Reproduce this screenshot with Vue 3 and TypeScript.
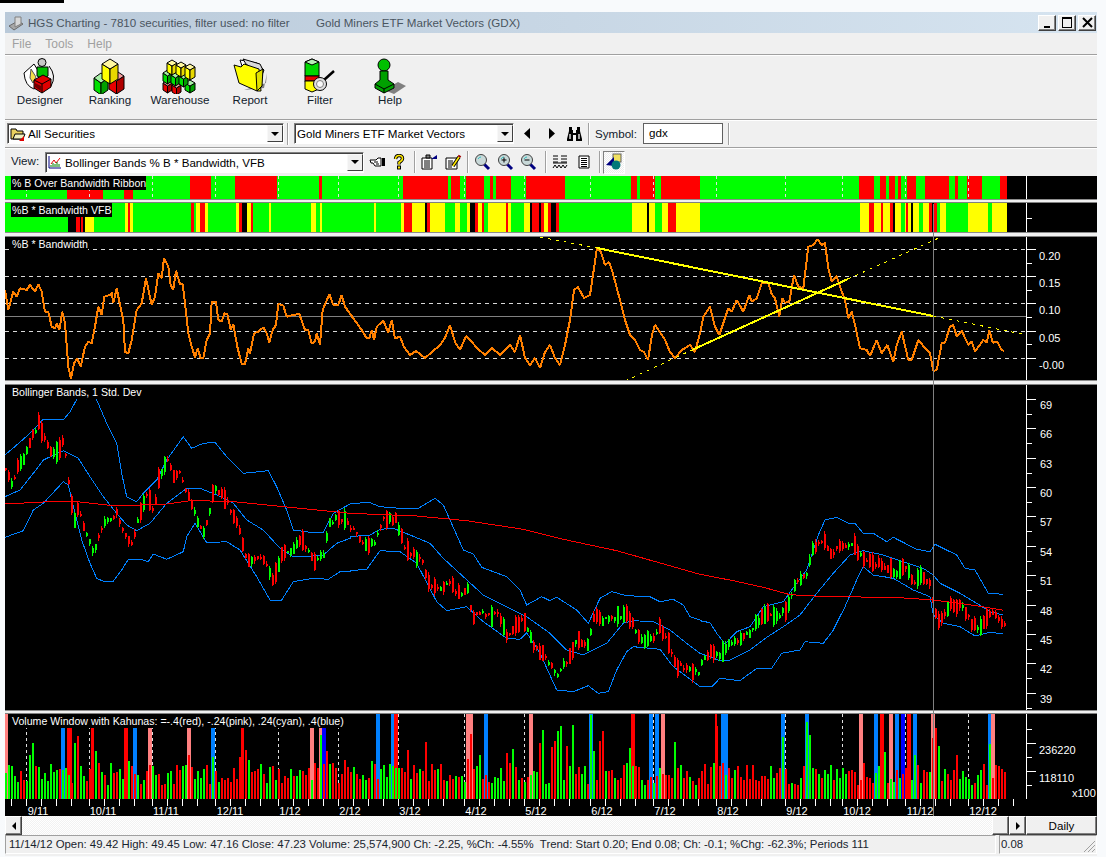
<template>
  <div class="page">
    <div class="top-strip"><div class="top-black"></div></div>
    <div class="window">
      <div class="titlebar">
        <svg class="app-icon" width="16" height="16" viewBox="0 0 16 16">
          <path d="M1 11 L10 6 L15 9 L6 15 Z" fill="#a8a8a8" stroke="#6a6a6a" />
          <path d="M7 2 h6 v7 l-6 3 Z" fill="#d8d8d8" stroke="#808080" />
        </svg>
        <span class="title-app">HGS Charting - 7810 securities, filter used: no filter</span>
        <span class="title-doc">Gold Miners ETF Market Vectors (GDX)</span>
        <div class="win-buttons">
          <button class="win-btn"><span class="glyph-min"></span></button>
          <button class="win-btn"><span class="glyph-max"></span></button>
          <button class="win-btn win-close">
            <svg width="11" height="11" viewBox="0 0 11 11"><path d="M1 1 L10 10 M10 1 L1 10" stroke="#000" stroke-width="2" /></svg>
          </button>
        </div>
      </div>

      <div class="menubar">
        <span>File</span>
        <span>Tools</span>
        <span>Help</span>
      </div>

      <div class="toolbar">
        <div class="tool">
          <svg width="36" height="36" viewBox="0 0 36 36">
            <path d="M2 15 L12 6 L23 24 L12 31 Q3 28 2 15 Z" fill="#fff" stroke="#000" />
            <path d="M9 11 L14 19 L11 25 L8 20 Z" fill="#f4e04a" stroke="#555" />
            <circle cx="20" cy="4.5" r="4" fill="#c8c8c8" stroke="#000" />
            <path d="M15 9 h11 v9 l-5 3 l-6 -3 Z" fill="#00c000" stroke="#000" />
            <path d="M12 22 L21 17 L29 21 L29 29 L20 35 L12 30 Z" fill="#e00000" stroke="#000" />
            <path d="M12 22 L20 26 L29 21 M20 26 V35" fill="none" stroke="#000" />
            <path d="M13 25 L19 28 V33 L13 29 Z" fill="#700000" />
            <path d="M27 8 Q35 18 29 28" fill="none" stroke="#000" />
          </svg>
          <span>Designer</span>
        </div>
        <div class="tool">
          <svg width="36" height="36" viewBox="0 0 36 36">
            <g v-for="(f, i) in rankingFaces" :key="i"><polygon :points="f.points" :fill="f.fill" stroke="#000" /></g>
          </svg>
          <span>Ranking</span>
        </div>
        <div class="tool">
          <svg width="36" height="36" viewBox="0 0 36 36">
            <g v-for="(f, i) in warehouseFaces" :key="i"><polygon :points="f.points" :fill="f.fill" stroke="#000" /></g>
          </svg>
          <span>Warehouse</span>
        </div>
        <div class="tool">
          <svg width="36" height="36" viewBox="0 0 36 36">
            <path d="M12 32 L34 25 L35 15 L32 30 Z" fill="#808080" />
            <path d="M8 2 L25 5 L32 12 L28 22 L10 8 Z" fill="#fff" stroke="#000" />
            <path d="M11 1 L28 6 L31 12 L30 18 L14 6 Z" fill="#d8d8d8" stroke="#000" />
            <path d="M2 7 L9 9 L12 6 L27 11 L29 33 L25 33 L7 25 Z" fill="#ffff00" stroke="#000" />
            <path d="M24 15 L31 11 L30 28 L25 33 Z" fill="#e0e000" stroke="#000" />
          </svg>
          <span>Report</span>
        </div>
        <div class="tool">
          <svg width="36" height="36" viewBox="0 0 36 36">
            <path d="M3 4 L10 1 L17 4 V18 H3 Z" fill="#00d800" stroke="#000" />
            <path d="M3 4 L10 1 L17 4 L10 7 Z" fill="#b8f0b8" stroke="#000" />
            <rect x="3" y="18" width="14" height="5" fill="#e80000" stroke="#000" />
            <path d="M3 23 H17 V31 L10 34 L3 31 Z" fill="#ffff00" stroke="#000" />
            <path d="M22 22 L32 13" stroke="#000" stroke-width="2.5" />
            <circle cx="18" cy="26" r="6.5" fill="#e0e0e0" stroke="#000" />
            <circle cx="18" cy="26" r="3.5" fill="#f8f8f8" stroke="#808080" />
          </svg>
          <span>Filter</span>
        </div>
        <div class="tool">
          <svg width="36" height="36" viewBox="0 0 36 36">
            <path d="M12 32 L26 24 L34 28 L22 36 Z" fill="#808080" />
            <circle cx="12" cy="7" r="6" fill="#00c000" stroke="#000" />
            <path d="M8 13 H16 V22 L22 26 V30 L12 35 L3 30 V26 L8 22 Z" fill="#00a000" stroke="#000" />
            <path d="M3 26 L12 31 L22 26 M12 31 V35" fill="none" stroke="#000" />
          </svg>
          <span>Help</span>
        </div>
      </div>

      <div class="row row-combos">
        <div class="combo combo-all">
          <svg width="16" height="16" viewBox="0 0 16 16">
            <path d="M1 3 h5 l1 2 h6 v8 H1 Z" fill="#e8d060" stroke="#000" />
            <path d="M3 13 L5 8 H15 L13 13 Z" fill="#f0f0c0" stroke="#000" />
            <path d="M9 15 L14 10 L14 15 Z" fill="#e00000" />
          </svg>
          <span class="combo-text">All Securities</span>
          <span class="combo-arrow"><i></i></span>
        </div>
        <span class="groove groove-first"></span>
        <div class="combo combo-etf">
          <span class="combo-text">Gold Miners ETF Market Vectors</span>
          <span class="combo-arrow"><i></i></span>
        </div>
        <svg class="nav-icon nav-prev" width="10" height="14" viewBox="0 0 10 14"><path d="M8 1 V12 L2 6.5 Z" fill="#000" /></svg>
        <svg class="nav-icon nav-next" width="10" height="14" viewBox="0 0 10 14"><path d="M2 1 V12 L8 6.5 Z" fill="#000" /></svg>
        <svg class="nav-icon nav-find" width="17" height="15" viewBox="0 0 17 15">
          <path d="M3 1 h3 v3 h1 v3 h3 v-3 h1 v-3 h3 v4 l2 8 v2 h-6 v-6 h-3 v6 h-6 v-2 l2 -8 Z" fill="#000" />
          <path d="M3 8 h2 v5 h-2 Z M12 8 h2 v5 h-2 Z" fill="#a0a0a0" />
        </svg>
        <span class="groove groove-sym"></span>
        <span class="sym-label">Symbol:</span>
        <div class="sym-input">gdx</div>
        <span class="groove"></span>
      </div>

      <div class="row row-view">
        <span class="view-label">View:</span>
        <div class="combo combo-view">
          <svg width="14" height="14" viewBox="0 0 14 14">
            <path d="M1 1 V13 H13" fill="none" stroke="#000080" />
            <path d="M3 9 L6 5 L8 8 L12 3" fill="none" stroke="#e00000" />
            <path d="M3 12 V10 M5 12 V8 M7 12 V9 M9 12 V7 M11 12 V9" stroke="#008000" />
          </svg>
          <span class="combo-text">Bollinger Bands % B * Bandwidth, VFB</span>
          <span class="combo-arrow"><i></i></span>
        </div>
        <svg class="view-hand" width="17" height="12" viewBox="0 0 17 12">
          <path d="M1 4 H7 L9 2 H12 V10 H6 L4 7 H2 Z" fill="#fff" stroke="#000" />
          <rect x="13" y="2" width="3" height="8" fill="#000" />
          <path d="M5 6 H9 M7 8 H10" stroke="#000" />
        </svg>
        <svg class="view-help" width="12" height="16" viewBox="0 0 12 16">
          <path d="M2.5 5 Q3 1.5 6 1.5 Q9.5 1.5 9.5 4.5 Q9.5 6.5 6 8.5 V10.5" fill="none" stroke="#000" stroke-width="3.4" />
          <path d="M2.5 5 Q3 1.5 6 1.5 Q9.5 1.5 9.5 4.5 Q9.5 6.5 6 8.5 V10.5" fill="none" stroke="#ffe800" stroke-width="1.6" />
          <rect x="4.5" y="12" width="3" height="3" fill="#ffe800" stroke="#000" />
        </svg>
        <span class="groove"></span>
        <svg class="view-doc" width="17" height="16" viewBox="0 0 17 16">
          <path d="M1 4 H11 V15 H1 Z" fill="#fff" stroke="#000" />
          <path d="M3 7 H9 M3 9 H9 M3 11 H9 M3 13 H9" stroke="#000" />
          <path d="M5 1 H9 V4 H5 Z" fill="#808080" stroke="#000" />
          <path d="M10 5 L16 1 V5 Z" fill="#000080" />
        </svg>
        <svg class="view-doc view-edit" width="17" height="16" viewBox="0 0 17 16">
          <path d="M1 4 H12 V15 H1 Z" fill="#fff" stroke="#000" />
          <path d="M3 7 H8 M3 9 H8 M3 11 H7 M3 13 H7" stroke="#000" />
          <path d="M8 12 L14 3" stroke="#000" stroke-width="3.4" />
          <path d="M8 12 L14 3" stroke="#ffe800" stroke-width="1.6" />
          <path d="M14 3 L15 1.5" stroke="#a00000" stroke-width="3" />
        </svg>
        <span class="groove"></span>
        <svg v-for="z in zoomIcons" :key="z" class="view-zoom" width="17" height="18" viewBox="0 0 17 18">
          <path d="M10 11 L15 16" stroke="#000080" stroke-width="3" />
          <circle cx="7" cy="7" r="5.5" fill="#c8d8d8" stroke="#404040" />
          <path d="M4 6 Q5 4 7 4" fill="none" stroke="#30c0c0" />
          <path v-if="z !== 'fit'" d="M4.5 7 H9.5" stroke="#000" />
          <path v-if="z === 'in'" d="M7 4.5 V9.5" stroke="#000" />
        </svg>
        <span class="groove groove-tight"></span>
        <svg class="view-lines" width="16" height="15" viewBox="0 0 16 15">
          <path d="M1 1 H6 M9 1 H15 M1 4 H6 M9 4 H15 M1 7 H6 M9 7 H15 M1 8 H15" stroke="#000" />
          <path d="M1 13 L3 10 L5 13 L7 10 L9 13 L11 10 L13 13 L15 10" fill="none" stroke="#000" />
        </svg>
        <svg class="view-list" width="12" height="14" viewBox="0 0 12 14">
          <path d="M1 1 H11 V13 H1 Z" fill="#fff" stroke="#000" />
          <path d="M3 3.5 H9 M3 5.5 H9 M3 7.5 H9 M3 9.5 H9 M3 11.5 H9" stroke="#000" />
        </svg>
        <span class="groove"></span>
        <div class="toggle-btn">
          <svg width="18" height="18" viewBox="0 0 18 18">
            <rect x="8" y="1" width="8" height="8" fill="#f0e060" stroke="#606060" />
            <path d="M1 12 L9 4 V13 Z" fill="#000080" />
            <circle cx="11" cy="12" r="4.5" fill="#007878" />
          </svg>
        </div>
      </div>

      <div class="charts">
        <div class="panel">
          <svg class="chart" width="1092" height="23" viewBox="5 176 1092 23" shape-rendering="crispEdges">
            <rect x="5" y="176" width="1002" height="23" fill="#00ff00" />
            <rect v-for="(s, i) in ribbonA" :key="i" :x="s[0]" y="176" :width="s[1] - s[0]" height="23" fill="#ff0000" />
            <line v-for="m in months" :key="m" :x1="m + 0.5" y1="176" :x2="m + 0.5" y2="199" class="month-dash" />
            <line x1="1026.5" y1="176" x2="1026.5" y2="199" stroke="#fff" />
          </svg>
          <span class="panel-label">% B Over Bandwidth Ribbon</span>
        </div>
        <div class="sep"></div>
        <div class="panel">
          <svg class="chart" width="1092" height="29" viewBox="5 203 1092 29" shape-rendering="crispEdges">
            <rect x="5" y="203" width="1002" height="29" fill="#00ff00" />
            <rect v-for="(s, i) in ribbonB" :key="i" :x="s[0]" y="203" :width="s[1] - s[0]" height="29" :fill="ribbonColor[s[2]]" />
            <line x1="1026.5" y1="203" x2="1026.5" y2="232" stroke="#fff" />
            <line x1="1027" y1="218.5" x2="1032" y2="218.5" stroke="#fff" />
          </svg>
          <span class="panel-label">%B * Bandwidth VFB</span>
        </div>
        <div class="sep sep-5"></div>
        <div class="panel">
          <svg class="chart" width="1092" height="143" viewBox="5 237 1092 143">
            <g shape-rendering="crispEdges">
              <line v-for="y in pctGrid" :key="y" x1="5" :y1="y + 0.5" x2="1027" :y2="y + 0.5" class="grid-dash" />
              <line x1="5" y1="316.5" x2="1027" y2="316.5" stroke="#808080" />
              <line x1="1026.5" y1="237" x2="1026.5" y2="380" stroke="#fff" />
              <line v-for="y in pctGrid" :key="'t' + y" x1="1027" :y1="y + 0.5" x2="1036" :y2="y + 0.5" stroke="#fff" />
              <line v-for="y in pctMinor" :key="'m' + y" x1="1027" :y1="y + 0.5" x2="1032" :y2="y + 0.5" stroke="#fff" />
              <polyline :points="orange" class="orange" />
              <line x1="597" y1="248" x2="933" y2="316" class="trend" />
              <line x1="692" y1="350" x2="848" y2="279" class="trend" />
              <line x1="540" y1="237" x2="597" y2="248" class="trend-dash" />
              <line x1="933" y1="316" x2="1022" y2="334" class="trend-dash" />
              <line x1="625" y1="381" x2="692" y2="350" class="trend-dash" />
              <line x1="848" y1="279" x2="941" y2="237" class="trend-dash" />
            </g>
            <text v-for="t in pctLabels" :key="t[0]" x="1039" :y="t[1]" class="axis-text">{{ t[0] }}</text>
          </svg>
          <span class="panel-label">%B * Bandwidth</span>
        </div>
        <div class="sep sep-5"></div>
        <div class="panel">
          <svg class="chart" width="1092" height="325" viewBox="5 385 1092 325">
            <g shape-rendering="crispEdges">
              <polyline :points="bandUpper" class="band" />
              <polyline :points="bandMiddle" class="band" />
              <polyline :points="bandLower" class="band" />
              <template v-for="(c, i) in candles" :key="i">
                <rect :x="c.x" :y="c.high" width="1" :height="c.low - c.high" :fill="c.color" />
                <rect :x="c.x" :y="c.top" width="2" :height="c.bottom - c.top" :fill="c.color" />
              </template>
              <polyline :points="redAverage" class="average" />
              <line x1="1026.5" y1="385" x2="1026.5" y2="710" stroke="#fff" />
              <template v-for="p in priceLabels" :key="p[0]">
                <line x1="1027" :y1="p[1] - 4.5" x2="1036" :y2="p[1] - 4.5" stroke="#fff" />
                <line x1="1027" :y1="p[1] + 10.5" x2="1032" :y2="p[1] + 10.5" stroke="#fff" />
              </template>
            </g>
            <text v-for="p in priceLabels" :key="'l' + p[0]" x="1040" :y="p[1] + 5" class="axis-text">{{ p[0] }}</text>
          </svg>
          <span class="panel-label">Bollinger Bands, 1 Std. Dev</span>
        </div>
        <div class="sep"></div>
        <div class="panel">
          <svg class="chart" width="1092" height="102" viewBox="5 715 1092 102">
            <g shape-rendering="crispEdges">
              <line v-for="m in months" :key="m" :x1="m + 0.5" y1="715" :x2="m + 0.5" y2="800" class="month-dash" />
              <rect v-for="(k, i) in kahunas" :key="i" :x="k[0]" y="715" :width="k[1] - k[0]" height="85" :fill="kahunaColor[k[2]]" />
              <rect v-for="b in volume" :key="b.x" :x="b.x" :y="800 - b.h" width="2" :height="b.h" :fill="b.color" />
              <line v-for="t in dateTicks" :key="t" :x1="t + 0.5" y1="800" :x2="t + 0.5" y2="807" stroke="#fff" />
              <line x1="1026.5" y1="715" x2="1026.5" y2="800" stroke="#fff" />
              <line v-for="y in [744, 772]" :key="y" x1="1027" :y1="y + 0.5" x2="1036" :y2="y + 0.5" stroke="#fff" />
              <line v-for="y in [730, 758, 786]" :key="y" x1="1027" :y1="y + 0.5" x2="1032" :y2="y + 0.5" stroke="#fff" />
            </g>
            <text v-for="m in monthLabels" :key="m[0]" :x="m[1]" y="816" class="axis-text" text-anchor="middle">{{ m[0] }}</text>
            <text x="1039" y="755" class="axis-text">236220</text>
            <text x="1039" y="783" class="axis-text">118110</text>
            <text x="1072" y="798" class="axis-text">x100</text>
          </svg>
          <span class="panel-label">Volume Window with Kahunas: =-.4(red), -.24(pink), .24(cyan), .4(blue)</span>
        </div>
        <div class="cursor"></div>
      </div>

      <div class="scrollrow">
        <button class="raised btn-scroll"><i class="arrow-left"></i></button>
        <div class="track"></div>
        <button class="raised btn-scroll"></button>
        <button class="raised btn-scroll"><i class="arrow-right"></i></button>
        <button class="raised btn-daily">Daily</button>
      </div>

      <div class="statusbar">
        <div class="status-main">11/14/12 Open: 49.42 High: 49.45 Low: 47.16 Close: 47.23 Volume: 25,574,900 Ch: -2.25, %Ch: -4.55%&nbsp; Trend: Start 0.20; End 0.08; Ch: -0.1; %Chg: -62.3%; Periods 111</div>
        <div class="status-side">
          0.08
          <svg class="gripper" width="13" height="13" viewBox="0 0 13 13">
            <path d="M12 1 L1 12 M12 5 L5 12 M12 9 L9 12" stroke="#a0a0a0" />
          </svg>
        </div>
      </div>
    </div>
  </div>
</template>

<script setup lang="ts">
type Pt = [number, number];

// traced off 3x crops of the chart, hence the offset + px / 3
function traced(ox: number, oy: number, flat: number[]): Pt[] {
  const out: Pt[] = [];
  for (let i = 0; i < flat.length; i += 2) out.push([ox + flat[i] / 3, oy + flat[i + 1] / 3]);
  return out;
}
const toPoints = (pts: Pt[]) => pts.map((p) => `${p[0].toFixed(1)},${p[1].toFixed(1)}`).join(' ');

function interp(path: Pt[], x: number): number {
  if (x <= path[0][0]) return path[0][1];
  for (let i = 1; i < path.length; i++) {
    if (x <= path[i][0]) {
      const [x0, y0] = path[i - 1];
      const [x1, y1] = path[i];
      return y0 + ((y1 - y0) * (x - x0)) / (x1 - x0 || 1);
    }
  }
  return path[path.length - 1][1];
}

let seed = 20121114;
function rnd(): number {
  seed = (seed * 1664525 + 1013904223) % 4294967296;
  return seed / 4294967296;
}

const months = [26, 89, 152, 215, 278, 338, 398, 464, 524, 590, 653, 716, 785, 842, 905, 968];
const monthLabels: [string, number][] = [
  ['9/11', 38], ['10/11', 103], ['11/11', 166], ['12/11', 230], ['1/12', 290], ['2/12', 350], ['3/12', 410], ['4/12', 476],
  ['5/12', 536], ['6/12', 602], ['7/12', 665], ['8/12', 728], ['9/12', 797], ['10/12', 857], ['11/12', 920], ['12/12', 983],
];
const dateTicks = months.flatMap((m) => [m, m + 15, m + 30, m + 45]).concat([11]);

const ribbonA: Pt[] = [
  [67, 103], [124, 133], [190, 211], [235, 277], [319, 322], [403, 448], [451, 460], [466, 484], [490, 493], [496, 511],
  [526, 565], [631, 637], [640, 655], [661, 700], [859, 874], [880, 886], [889, 895], [898, 901], [907, 916], [925, 949],
  [955, 958], [967, 982], [1000, 1007],
];
const ribbonColor: Record<string, string> = { y: '#ffff00', r: '#ff0000', k: '#000000' };
const ribbonB: [number, number, string][] = [
  [68, 76, 'k'], [76, 80, 'r'], [80, 81, 'k'], [81, 83, 'r'], [83, 85, 'k'], [85, 94, 'y'], [125, 128, 'y'], [128, 130, 'r'], [130, 133, 'y'],
  [191, 194, 'r'], [196, 200, 'y'], [200, 205, 'r'], [205, 208, 'y'], [236, 239, 'y'], [239, 242, 'r'], [242, 247, 'k'], [247, 251, 'y'], [251, 253, 'r'],
  [269, 271, 'y'], [311, 316, 'y'], [320, 322, 'y'], [374, 376, 'y'], [401, 404, 'y'], [404, 412, 'r'], [412, 425, 'y'], [425, 427, 'k'], [427, 430, 'r'],
  [430, 445, 'y'], [455, 460, 'y'], [467, 470, 'y'], [470, 475, 'k'], [475, 478, 'r'], [478, 482, 'y'], [482, 484, 'r'], [488, 506, 'y'], [506, 508, 'r'],
  [508, 511, 'y'], [524, 530, 'y'], [530, 532, 'k'], [532, 539, 'r'], [539, 541, 'k'], [541, 544, 'r'], [544, 548, 'y'], [548, 551, 'r'], [551, 556, 'k'],
  [556, 559, 'r'], [632, 647, 'y'], [647, 649, 'k'], [649, 655, 'y'], [662, 668, 'y'], [668, 676, 'r'], [676, 700, 'y'], [860, 869, 'y'], [869, 874, 'r'],
  [874, 881, 'y'], [881, 883, 'r'], [883, 890, 'y'], [890, 893, 'r'], [893, 895, 'k'], [895, 901, 'y'], [905, 906, 'y'], [906, 908, 'r'], [908, 911, 'y'],
  [911, 913, 'k'], [913, 919, 'y'], [923, 929, 'y'], [929, 932, 'r'], [932, 934, 'k'], [934, 937, 'r'], [940, 946, 'y'], [968, 988, 'y'], [992, 1007, 'y'],
];

const pctGrid = [249, 276, 303, 331, 358];
const pctMinor = [263, 290, 317, 344];
const pctLabels: [string, number][] = [['0.20', 260], ['0.15', 287], ['0.10', 314], ['0.05', 342], ['-0.00', 369]];
const priceLabels: [string, number][] = [
  ['69', 404], ['66', 433], ['63', 463], ['60', 492], ['57', 521], ['54', 551], ['51', 580], ['48', 610], ['45', 639], ['42', 668], ['39', 698],
];

const orange = toPoints([
  ...traced(0, 170, [
    15, 360, 25, 420, 40, 365, 50, 380, 60, 355, 80, 360, 90, 345, 105, 365, 115, 342, 125, 365, 135, 425, 145, 425, 155, 470, 165, 475, 170, 460,
    178, 480, 187, 425, 195, 460, 205, 590, 213, 627, 222, 580, 232, 565, 242, 590, 255, 530, 265, 515, 275, 520, 285, 470, 295, 410, 305, 435,
    313, 380, 330, 375, 335, 368, 340, 400, 350, 355, 360, 405, 370, 450, 375, 545, 385, 550, 395, 510, 410, 420, 425, 400, 438, 325, 455, 405,
    465, 380, 475, 310, 485, 325, 492, 265, 505, 290, 512, 345, 520, 360, 528, 302, 540, 342, 548, 342, 555, 400, 565, 490, 575, 530, 585, 562,
    593, 535, 602, 565, 610, 565, 620, 510, 630, 490, 635, 395, 648, 395, 655, 450, 665, 455, 673, 430, 682, 432, 692, 478, 700, 463, 712, 530,
    725, 582, 735, 582, 745, 535, 750, 552, 762, 490, 775, 485, 790, 472, 800, 490, 808, 517, 818, 480, 828, 465, 835, 402, 850, 407, 860, 440,
    880, 435, 898, 432, 915, 480, 925, 480, 935, 520, 945, 515, 950, 490, 960, 525, 968, 420, 988, 372, 1000, 405, 1015, 405, 1025, 375, 1035, 410,
    1060, 445, 1085, 480, 1100, 505, 1108, 505, 1115, 480, 1122, 510, 1130, 470, 1150, 452, 1165, 488, 1175, 450, 1185, 505, 1200, 500,
  ]),
  [404, 347], [410, 355], [416, 351], [425, 358], [432, 352], [440, 345], [445, 338], [450, 325], [455, 342], [460, 350], [466, 336], [470, 340], [478, 349],
  [485, 355], [492, 348], [500, 355], [505, 350], [510, 345], [515, 352], [520, 335], [525, 358], [530, 365], [535, 358], [540, 368], [545, 352], [550, 345],
  [555, 358], [560, 365], [565, 345], [570, 320], [574, 290], [578, 287], [584, 298], [590, 295], [597, 248], [601, 252], [605, 265], [609, 262], [612, 270],
  [616, 285], [620, 300], [625, 320], [630, 335], [635, 340], [640, 350], [644, 352], [648, 360], [652, 335], [655, 325], [660, 332], [665, 340], [670, 352],
  [675, 358], [682, 350], [690, 345], [695, 352],
  ...traced(700, 170, [
    0, 490, 10, 440, 30, 410, 45, 470, 58, 495, 70, 460, 85, 415, 95, 425, 110, 390, 130, 425, 148, 375, 155, 395, 170, 385, 185, 340, 205, 340, 215, 372,
    225, 385, 238, 440, 247, 385, 255, 398, 268, 395, 282, 315, 295, 350, 310, 355, 325, 230, 340, 225, 353, 208, 365, 225, 375, 218, 385, 295, 395, 335,
    410, 318, 420, 350, 435, 390, 445, 445, 455, 425, 465, 465, 480, 535, 500, 540, 510, 558, 530, 510, 545, 550, 562, 525, 580, 575, 590, 525, 605, 485,
    625, 570, 635, 570, 655, 510, 680, 540, 690, 550, 700, 603, 710, 600, 725, 520, 735, 518, 750, 470, 760, 465, 770, 500, 785, 482, 805, 525, 815, 515,
    825, 545, 850, 510, 860, 518, 868, 480, 878, 518, 892, 515, 905, 540, 912, 543,
  ]),
]);

const bandUpper = toPoints([
  ...traced(0, 380, [
    15, 225, 50, 195, 90, 160, 130, 118, 190, 120, 210, 95, 235, 50, 262, 20, 290, 60, 320, 130, 350, 190, 365, 280, 380, 350, 410, 365, 430, 340, 470, 300,
    500, 240, 550, 170, 575, 205, 610, 190, 645, 187, 680, 230, 730, 280, 805, 272, 830, 320, 860, 390, 880, 450, 930, 457, 970, 457, 1000, 400, 1050, 372,
  ]),
  ...traced(350, 480, [
    0, 70, 60, 68, 90, 80, 150, 85, 205, 85, 255, 55, 280, 75, 300, 120, 340, 210, 370, 222, 395, 262, 470, 290, 510, 330, 530, 375, 575, 350, 600, 362, 620, 352,
    680, 390, 715, 430, 750, 355, 785, 335, 830, 347, 900, 350, 930, 365, 970, 358, 1000, 375, 1020, 410, 1050, 420,
  ]),
  ...traced(700, 500, [
    0, 362, 30, 368, 50, 400, 75, 432, 110, 395, 150, 380, 190, 320, 250, 305, 275, 270, 320, 210, 355, 105, 375, 60, 410, 52, 445, 70, 465, 70, 490, 100, 520, 100,
    560, 125, 580, 112, 650, 148, 690, 155, 705, 133, 770, 165, 795, 205, 825, 210, 865, 280, 910, 283,
  ]),
]);
const bandMiddle = toPoints([
  ...traced(0, 380, [
    15, 350, 60, 330, 100, 280, 130, 240, 190, 212, 235, 235, 270, 290, 310, 350, 350, 400, 380, 435, 410, 452, 450, 430, 500, 370, 560, 325, 600, 325, 650, 345,
    700, 370, 740, 420, 790, 450, 840, 505, 880, 530, 920, 530, 970, 525, 1010, 490, 1050, 475,
  ]),
  ...traced(350, 480, [
    0, 170, 60, 165, 90, 148, 130, 145, 180, 165, 240, 190, 280, 235, 340, 290, 400, 345, 460, 375, 530, 410, 600, 460, 650, 510, 700, 525, 770, 490, 820, 430,
    850, 422, 910, 425, 960, 450, 1010, 490, 1050, 520,
  ]),
  ...traced(700, 500, [
    0, 460, 60, 482, 90, 480, 150, 450, 200, 412, 250, 380, 300, 345, 350, 280, 400, 220, 450, 165, 490, 152, 550, 165, 610, 185, 670, 205, 700, 225, 720, 250,
    780, 280, 830, 310, 870, 335, 910, 345,
  ]),
]);
const bandLower = toPoints([
  ...traced(0, 380, [
    15, 472, 70, 452, 100, 390, 130, 370, 190, 305, 205, 315, 225, 400, 245, 480, 270, 550, 290, 595, 310, 604, 340, 604, 365, 570, 385, 538, 430, 540, 445, 545,
    460, 522, 500, 538, 550, 515, 560, 470, 585, 430, 620, 488, 680, 485, 720, 510, 770, 590, 810, 660, 845, 660, 880, 605, 940, 595, 985, 598, 1020, 575, 1050, 575,
  ]),
  ...traced(350, 480, [
    0, 272, 50, 268, 90, 212, 150, 215, 200, 250, 260, 365, 290, 392, 350, 380, 400, 425, 470, 475, 510, 478, 530, 458, 570, 520, 620, 630, 670, 635, 715, 617,
    745, 640, 775, 635, 800, 570, 830, 515, 850, 500, 930, 508, 970, 560, 1010, 590, 1050, 620,
  ]),
  ...traced(700, 500, [
    0, 560, 35, 560, 60, 535, 120, 542, 170, 505, 215, 505, 245, 460, 300, 450, 315, 425, 370, 430, 400, 390, 435, 320, 470, 240, 490, 200, 520, 225, 580, 235,
    640, 270, 690, 290, 700, 345, 730, 370, 780, 380, 825, 408, 870, 397, 910, 402,
  ]),
]);
const redAverage = toPoints([
  ...traced(0, 380, [15, 372, 130, 366, 230, 365, 350, 378, 500, 372, 570, 362, 690, 364, 800, 375, 1050, 400]),
  ...traced(350, 480, [200, 108, 350, 122, 520, 148, 640, 178, 800, 212, 1050, 283]),
  ...traced(700, 500, [100, 242, 190, 262, 270, 284, 380, 290, 580, 292, 700, 300, 830, 317, 910, 331]),
]);

const pricePath: Pt[] = [
  ...traced(0, 380, [
    15, 270, 35, 320, 50, 260, 70, 235, 95, 170, 115, 130, 135, 190, 150, 210, 170, 220, 190, 170, 205, 320, 220, 430, 235, 380, 250, 450, 280, 520, 295, 460, 320, 420,
    350, 400, 375, 470, 395, 490, 410, 420, 440, 340, 460, 400, 475, 290, 500, 240, 520, 290, 540, 280, 565, 360, 590, 420, 610, 460, 640, 330, 660, 340, 680, 370,
    715, 450, 740, 540, 770, 530, 800, 550, 815, 600, 830, 565, 845, 510, 870, 510, 900, 480, 920, 510, 945, 550, 970, 520, 985, 430, 1010, 410, 1040, 420,
  ]),
  ...traced(350, 480, [
    0, 140, 40, 190, 70, 190, 100, 110, 135, 120, 165, 210, 190, 225, 215, 245, 235, 310, 265, 330, 300, 310, 325, 345, 350, 320, 365, 410, 400, 400, 440, 405, 470, 465,
    490, 440, 520, 420, 545, 485, 580, 530, 600, 560, 620, 590, 650, 540, 680, 475, 710, 500, 730, 410, 760, 420, 800, 410, 830, 400, 850, 445, 880, 490, 910, 470,
    930, 440, 955, 490, 975, 560, 1010, 560, 1050, 585,
  ]),
  ...traced(700, 500, [
    0, 490, 30, 450, 60, 470, 90, 430, 130, 415, 160, 380, 190, 340, 230, 350, 255, 330, 285, 250, 315, 230, 335, 150, 370, 120, 390, 160, 420, 140, 460, 140, 490, 180,
    520, 190, 560, 200, 585, 225, 610, 190, 640, 250, 665, 225, 690, 255, 700, 320, 715, 370, 750, 310, 785, 320, 815, 370, 835, 380, 870, 340, 905, 365, 915, 385,
  ]),
];

const GREEN = '#00ff00';
const RED = '#ff0000';
const candles = Array.from({ length: 334 }, (_, i) => {
  const x = 5 + 3 * i;
  const mid = interp(pricePath, x) + (rnd() - 0.5) * 5;
  const rising = interp(pricePath, x + 6) < interp(pricePath, x - 3);
  const r = rnd();
  const half = 1 + r * r * 9;
  const top = Math.round(mid - half);
  const bottom = Math.round(mid + half);
  return {
    x,
    top,
    bottom,
    high: top - Math.round(rnd() * 3),
    low: bottom + Math.round(rnd() * 3),
    color: rnd() < (rising ? 0.7 : 0.18) ? GREEN : RED,
  };
});

const kahunaColor: Record<string, string> = { p: '#ff8080', b: '#0080ff', d: '#0000ff', r: '#ff0000' };
const kahunas: [number, number, string][] = [
  [5, 8, 'p'], [61, 65, 'b'], [67, 72, 'r'], [91, 93, 'r'], [124, 128, 'r'], [133, 137, 'b'], [148, 152, 'p'], [187, 191, 'p'], [211, 215, 'b'], [241, 243, 'r'],
  [310, 314, 'p'], [319, 322, 'p'], [322, 326, 'd'], [376, 380, 'b'], [391, 394, 'b'], [394, 398, 'r'], [466, 473, 'p'], [484, 488, 'b'], [529, 533, 'p'],
  [589, 593, 'b'], [631, 635, 'r'], [649, 653, 'b'], [655, 659, 'b'], [661, 665, 'p'], [715, 717, 'r'], [721, 728, 'b'], [781, 785, 'b'], [805, 809, 'b'],
  [859, 863, 'p'], [874, 878, 'b'], [880, 884, 'r'], [889, 893, 'p'], [895, 899, 'b'], [901, 905, 'd'], [907, 911, 'r'], [913, 917, 'b'], [931, 935, 'p'],
  [988, 991, 'b'], [991, 995, 'p'],
];

// tall bars read off the crops: x, height, colour
const volumeSpikes: [number, number, string][] = [
  [32, 56, GREEN], [28, 44, GREEN], [76, 63, RED], [73, 40, RED], [74, 56, GREEN], [91, 72, RED], [95, 48, GREEN], [124, 72, RED], [128, 38, GREEN], [152, 33, GREEN],
  [187, 44, RED], [211, 42, GREEN], [241, 72, RED], [244, 49, RED], [248, 39, GREEN], [238, 42, RED], [321, 64, GREEN], [325, 48, RED], [328, 35, GREEN], [343, 39, RED],
  [370, 38, GREEN], [382, 34, GREEN], [406, 49, RED], [424, 57, RED], [469, 65, RED], [466, 40, RED], [478, 44, GREEN], [505, 46, RED], [511, 50, GREEN], [538, 56, RED],
  [542, 69, GREEN], [550, 52, RED], [553, 58, RED], [556, 68, GREEN], [559, 73, GREEN], [566, 53, RED], [571, 74, GREEN], [589, 84, GREEN], [593, 48, GREEN], [598, 58, RED],
  [601, 68, RED], [628, 51, GREEN], [673, 57, GREEN], [715, 73, RED], [781, 62, GREEN], [805, 77, GREEN], [810, 64, GREEN], [883, 47, GREEN], [913, 44, GREEN],
  [932, 61, RED], [934, 71, RED], [937, 53, GREEN], [955, 44, RED], [989, 55, GREEN],
];
const volume = Array.from({ length: 334 }, (_, i) => ({
  x: 5 + 3 * i,
  h: Math.round(14 + rnd() * 22),
  color: rnd() < 0.4 ? GREEN : RED,
}));
for (const [x, h, color] of volumeSpikes) {
  const bar = volume[Math.round((x - 5) / 3)];
  bar.h = h;
  bar.color = color;
}

interface Face { points: string; fill: string }

function cube(x: number, y: number, w: number, h: number, left: string, right: string, top: string): Face[] {
  const d = Math.round(w / 3);
  return [
    { points: `${x},${y + d} ${x + w / 2},${y + 2 * d} ${x + w / 2},${y + 2 * d + h} ${x},${y + d + h}`, fill: left },
    { points: `${x + w / 2},${y + 2 * d} ${x + w},${y + d} ${x + w},${y + d + h} ${x + w / 2},${y + 2 * d + h}`, fill: right },
    { points: `${x},${y + d} ${x + w / 2},${y} ${x + w},${y + d} ${x + w / 2},${y + 2 * d}`, fill: top },
  ];
}

const rankingFaces: Face[] = [
  ...cube(2, 15, 14, 12, '#00e000', '#00a000', '#a8f0a8'),
  ...cube(17, 13, 15, 13, '#e80000', '#b00000', '#f8a0a0'),
  ...cube(10, 1, 16, 15, '#ffff00', '#e8d800', '#fff8a0'),
];
const warehouseFaces: Face[] = [
  ...cube(1, 22, 9, 7, '#e80000', '#b00000', '#f8a0a0'),
  ...cube(10, 24, 9, 7, '#e80000', '#b00000', '#f8a0a0'),
  ...cube(23, 22, 10, 7, '#00e000', '#00a000', '#a8f0a8'),
  ...cube(1, 12, 9, 8, '#00e000', '#00a000', '#a8f0a8'),
  ...cube(9, 14, 9, 8, '#00e000', '#00a000', '#a8f0a8'),
  ...cube(17, 15, 9, 8, '#00e000', '#00a000', '#a8f0a8'),
  ...cube(5, 2, 10, 9, '#ffff00', '#e8d800', '#fff8a0'),
  ...cube(14, 4, 10, 9, '#ffff00', '#e8d800', '#fff8a0'),
  ...cube(23, 6, 10, 10, '#ffff00', '#e8d800', '#fff8a0'),
];

const zoomIcons = ['fit', 'in', 'out'];
</script>

<style>
html, body {
  margin: 0;
  background: #f8fafc;
}
</style>

<style scoped>
.page {
  width: 1106px;
  height: 857px;
  overflow: hidden;
  background: #f8fafc;
  font-family: "Liberation Sans", Arial, sans-serif;
  font-size: 11.6px;
  color: #000;
}
.top-strip {
  height: 12px;
}
.top-black {
  width: 64px;
  height: 3px;
  background: #000;
}
.window {
  width: 1092px;
  margin-left: 5px;
  background: #f0f0f0;
}
.titlebar {
  height: 21px;
  display: flex;
  align-items: center;
  background: linear-gradient(90deg, #b9c9d9, #d6e4f0);
  color: #4a5560;
  font-size: 11.6px;
}
.app-icon {
  margin: 0 4px 0 3px;
  flex: none;
}
.title-app {
  width: 288px;
  flex: none;
}
.win-buttons {
  margin-left: auto;
  margin-right: 1px;
  display: flex;
  gap: 2px;
}
.win-btn {
  width: 18px;
  height: 16px;
  padding: 0;
  display: flex;
  align-items: center;
  justify-content: center;
  background: #f0f0f0;
  border: 1px solid;
  border-color: #fff #404040 #404040 #fff;
  box-shadow: inset -1px -1px #808080;
}
.glyph-min {
  width: 6px;
  height: 2px;
  margin-top: 8px;
  background: #000;
}
.glyph-max {
  width: 8px;
  height: 8px;
  border: 1px solid #000;
  border-top-width: 2px;
}
.menubar {
  height: 21px;
  box-sizing: content-box;
  display: flex;
  gap: 14px;
  align-items: center;
  padding-left: 7px;
  color: #a0a0a0;
  border-bottom: 1px solid #a0a0a0;
  box-shadow: 0 1px #fff;
  font-size: 12px;
}
.toolbar {
  height: 64px;
  display: flex;
  border-bottom: 1px solid #a0a0a0;
  box-shadow: 0 1px #fff;
}
.tool {
  width: 70px;
  display: flex;
  flex-direction: column;
  align-items: center;
  padding-top: 3px;
  color: #10202c;
}
.tool span {
  margin-top: -1px;
  line-height: 14px;
}
.row {
  display: flex;
  align-items: center;
}
.row-combos {
  height: 27px;
  padding-left: 2px;
  border-bottom: 1px solid #a0a0a0;
  box-shadow: 0 1px #fff;
}
.row-view {
  height: 28px;
}
.combo {
  height: 21px;
  box-sizing: border-box;
  display: flex;
  align-items: center;
  gap: 2px;
  padding-left: 2px;
  background: #fff;
  border: 1px solid;
  border-color: #808080 #fff #fff #808080;
  box-shadow: inset 1px 1px #404040;
}
.combo-text {
  flex: 1;
  white-space: nowrap;
  overflow: hidden;
}
.combo-all {
  width: 277px;
}
.combo-etf {
  width: 220px;
}
.combo-view {
  width: 319px;
  gap: 3px;
}
.combo-arrow {
  width: 16px;
  height: 17px;
  flex: none;
  display: flex;
  align-items: center;
  justify-content: center;
  background: #f0f0f0;
  border: 1px solid;
  border-color: #f8f8f8 #404040 #404040 #f8f8f8;
  box-sizing: border-box;
}
.combo-arrow i {
  width: 0;
  height: 0;
  border: 4px solid transparent;
  border-top: 4px solid #000;
  border-bottom: 0;
}
.groove {
  width: 0;
  height: 22px;
  margin: 0 5px;
  border-left: 1px solid #a0a0a0;
  border-right: 1px solid #fff;
  flex: none;
}
.groove-first {
  margin-left: 3px;
}
.groove-tight {
  margin-left: 2px;
}
.nav-prev {
  margin-left: 8px;
}
.nav-next {
  margin-left: 15px;
}
.nav-find {
  margin-left: 9px;
}
.sym-label {
  width: 48px;
  flex: none;
  color: #10202c;
}
.sym-input {
  width: 80px;
  height: 21px;
  box-sizing: border-box;
  padding: 2px 0 0 5px;
  background: #fff;
  border: 1px solid #606060;
}
.view-label {
  width: 34px;
  margin: -3px 0 0 6px;
  color: #10202c;
}
.view-hand {
  margin-left: 5px;
}
.view-help {
  margin: 0 4px 0 7px;
}
.view-edit {
  margin-left: 7px;
}
.view-zoom {
  margin-right: 6px;
}
.view-list {
  margin: 0 4px 0 10px;
}
.toggle-btn {
  width: 22px;
  height: 23px;
  margin-left: -3px;
  display: flex;
  align-items: center;
  justify-content: center;
  background: repeating-conic-gradient(#fff 0 25%, #ececec 0 50%) 0 0 / 2px 2px;
  border: 1px solid;
  border-color: #808080 #fff #fff #808080;
  box-sizing: border-box;
}
.charts {
  position: relative;
  background: #000;
}
.panel {
  position: relative;
  background: #000;
}
.chart {
  display: block;
}
.panel-label {
  position: absolute;
  left: 6px;
  top: 0;
  background: #000;
  color: #fff;
  font-size: 10.6px;
  line-height: 13px;
  white-space: nowrap;
  padding: 1px 0 0 1px;
}
.sep {
  height: 4px;
  background: linear-gradient(#8c8c8c 0 1px, #f0f0f0 1px 3px, #808080 3px);
}
.sep-5 {
  height: 5px;
  background: linear-gradient(#8c8c8c 0 1px, #f0f0f0 1px 4px, #808080 4px);
}
.cursor {
  position: absolute;
  left: 928px;
  top: 28px;
  bottom: 0;
  width: 1px;
  background: #808080;
}
.month-dash {
  stroke: #e0e0e0;
  stroke-dasharray: 3 3;
}
.grid-dash {
  stroke: #d8d8d8;
  stroke-dasharray: 4 4;
}
.axis-text {
  fill: #fff;
  font-size: 11px;
  font-family: "Liberation Sans", Arial, sans-serif;
}
.orange {
  fill: none;
  stroke: #ff8000;
  stroke-width: 2;
  stroke-linejoin: bevel;
}
.trend {
  stroke: #ffff00;
  stroke-width: 2;
}
.trend-dash {
  stroke: #ffff00;
  stroke-width: 1;
  stroke-dasharray: 3 5;
}
.band {
  fill: none;
  stroke: #0080ff;
}
.average {
  fill: none;
  stroke: #ff0000;
}
.scrollrow {
  height: 19px;
  display: flex;
  background: repeating-conic-gradient(#fff 0 25%, #f2f2f2 0 50%) 0 0 / 2px 2px;
}
.raised {
  padding: 0;
  background: #f0f0f0;
  border: 1px solid;
  border-color: #fff #404040 #404040 #fff;
  box-shadow: inset -1px -1px #808080;
  display: flex;
  align-items: center;
  justify-content: center;
  font: 11.6px "Liberation Sans", Arial, sans-serif;
}
.btn-scroll {
  width: 17px;
  flex: none;
}
.track {
  flex: 1;
}
.btn-daily {
  width: 71px;
  flex: none;
}
.arrow-left,
.arrow-right {
  width: 0;
  height: 0;
  border: 4px solid transparent;
}
.arrow-left {
  border-right: 4px solid #000;
  border-left: 0;
}
.arrow-right {
  border-left: 4px solid #000;
  border-right: 0;
}
.statusbar {
  height: 21px;
  display: flex;
  gap: 3px;
  color: #18242e;
  font-size: 11.4px;
}
.status-main,
.status-side {
  box-sizing: border-box;
  height: 19px;
  line-height: 17px;
  padding-left: 3px;
  border: 1px solid;
  border-color: #a0a0a0 #fff #fff #a0a0a0;
  white-space: nowrap;
}
.status-main {
  width: 991px;
}
.status-side {
  flex: 1;
  padding-left: 1px;
  position: relative;
}
.gripper {
  position: absolute;
  right: 0;
  bottom: 0;
}
</style>
